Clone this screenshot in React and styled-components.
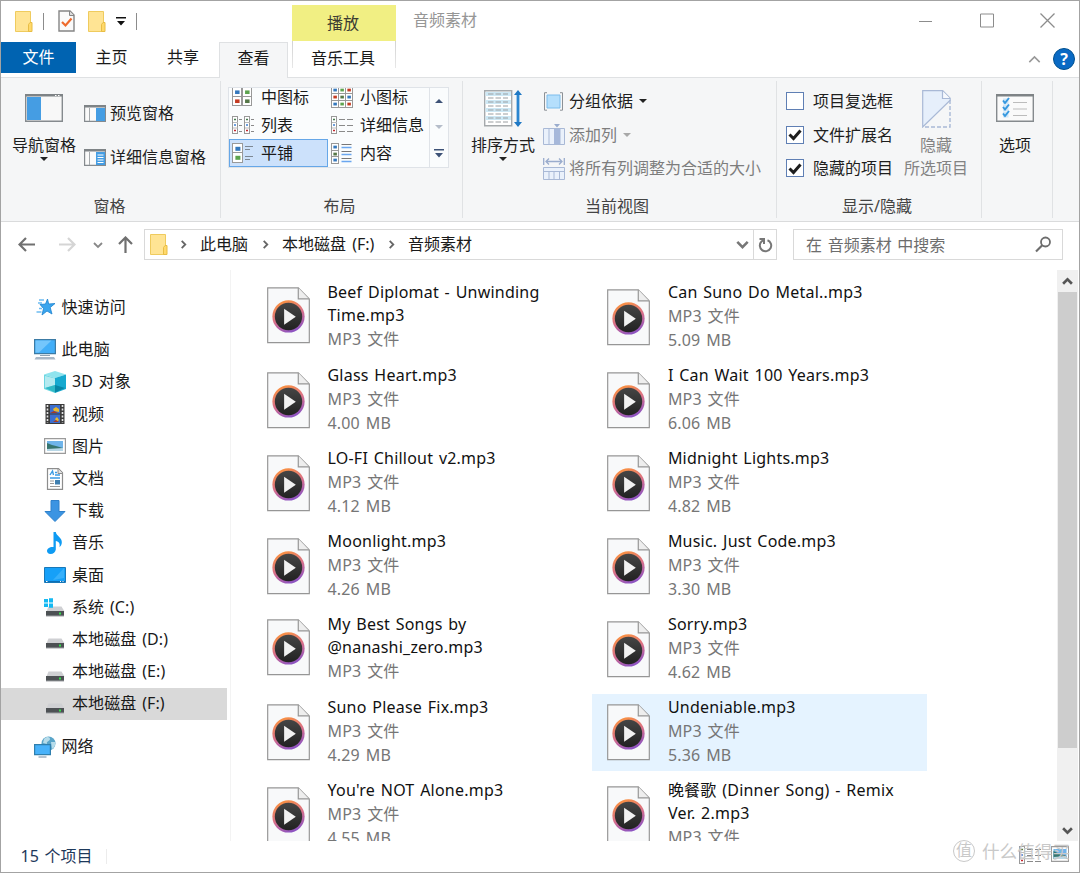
import { memo } from 'react';
import styled, { createGlobalStyle, css } from 'styled-components';

const GlobalStyle = createGlobalStyle`
  * {
    box-sizing: border-box;
  }

  body {
    margin: 0;
    background: white;
    font-family: 'Noto Sans', 'Noto Sans CJK SC', sans-serif;
    font-size: 16px;
    line-height: 24px;
    color: #1a1a1a;
    overflow: hidden;
  }

  svg {
    display: block;
    flex: none;
  }
`;

const Window = styled.div`
  display: flex;
  flex-direction: column;
  width: 1080px;
  height: 873px;
  border: 1px solid #a3a3a3;
  background: white;
  white-space: nowrap;
  overflow: hidden;
`;

/* title bar and tabs */

const Head = styled.header`
  display: flex;
  height: 77px;
  flex: none;
  border-bottom: 1px solid #dfe1e3;
`;

const HeadLeft = styled.div`
  display: flex;
  flex-direction: column;
  width: 291px;
`;

const QuickBar = styled.div`
  display: flex;
  align-items: center;
  height: 41px;
  padding: 0 0 1px 13px;
  flex: none;
`;

const QuickDivider = styled.i`
  width: 1px;
  height: 17px;
  background: #8c8c8c;
  margin: 0 ${({ $right }) => $right}px 0 ${({ $left }) => $left}px;
`;

const Tabs = styled.nav`
  display: flex;
  height: 36px;
`;

const Tab = styled.div`
  width: ${({ $width }) => $width}px;
  height: 31px;
  padding-top: 3px;
  text-align: center;
  ${({ $file }) =>
    $file &&
    css`
      background: #0063b1;
      color: white;
    `}
  ${({ $active }) =>
    $active &&
    css`
      height: 36px;
      background: #f5f6f7;
      border: 1px solid #dfe1e3;
      border-bottom: 0;
    `}
`;

const ContextTab = styled.div`
  width: 104px;
  text-align: center;
`;

const ContextTitle = styled.div`
  height: 36px;
  margin-top: 4px;
  padding: 6px 2px 0 0;
  background: #f1ef83;
  color: #3c3c32;
`;

const ContextName = styled.div`
  height: 27px;
  padding: 5px 2px 0 0;
  border: 1px solid;
  border-width: 0 1px;
  border-image: linear-gradient(#d2d2d2, #e8e8e8) 1;
`;

const Caption = styled.div`
  padding: 7px 0 0 17px;
  flex: 1;
  color: #969696;
`;

const HeadRight = styled.div`
  width: 165px;
  color: #8c8c8c;
`;

const Controls = styled.div`
  display: flex;
  align-items: center;
  height: 39px;
  gap: 41.5px;
  padding-left: 4px;
`;

const HelpRow = styled.div`
  display: flex;
  align-items: center;
  justify-content: flex-end;
  gap: 12px;
  height: 38px;
  padding-right: 4px;
`;

const HelpBadge = styled.div`
  width: 22px;
  height: 22px;
  border: 1px solid #00508f;
  border-radius: 50%;
  background: #0a6ac4;
  color: white;
  font-weight: 700;
  line-height: 20px;
  text-align: center;
`;

/* ribbon */

const Ribbon = styled.section`
  display: flex;
  flex: none;
  height: 144px;
  padding: 3px 0 3px;
  background: #f5f6f7;
  border-bottom: 1px solid #dadbdc;
`;

const Group = styled.div`
  display: flex;
  flex-direction: column;
  width: ${({ $width }) => $width}px;
  border-right: 1px solid #e0e2e4;
`;

const GroupBody = styled.div`
  display: flex;
  height: 113px;
  padding-left: ${({ $left }) => $left}px;
`;

const GroupName = styled.div`
  padding-right: ${({ $shift = 4 }) => $shift}px;
  text-align: center;
  color: #444;
`;

const BigButton = styled.div`
  display: flex;
  flex-direction: column;
  align-items: center;
  width: 64px;
  padding-top: ${({ $top = 13 }) => $top}px;
  color: ${({ $off }) => ($off ? '#838383' : '#1e1e1e')};
`;

const BigLabel = styled.div`
  margin-top: ${({ $gap = 12 }) => $gap}px;
  line-height: 23px;
  text-align: center;
`;

const Caret = styled.i`
  width: 0;
  height: 0;
  border: 4px solid transparent;
  border-bottom: 0;
  border-top-color: ${({ $off }) => ($off ? '#a8a8a8' : '#222')};
`;

const Stack = styled.div`
  display: flex;
  flex-direction: column;
  gap: ${({ $gap }) => $gap}px;
  padding: ${({ $top }) => $top}px 0 0 ${({ $left }) => $left}px;
`;

const SmallButton = styled.div`
  display: flex;
  align-items: center;
  gap: ${({ $gap = 4 }) => $gap}px;
  height: 24px;
  color: ${({ $off }) => ($off ? '#7d7d7d' : '#1e1e1e')};

  ${Caret} {
    margin-left: 2px;
  }
`;

const Gallery = styled.div`
  display: flex;
  width: 221px;
  height: 81px;
  margin-top: 6px;
  border: 1px solid #dfe3e8;
  background: #fafcfd;
  overflow: hidden;
`;

const GalleryItems = styled.div`
  display: grid;
  grid-template-columns: 99px 101px;
  grid-auto-rows: 28px;
  align-content: end;
`;

const GalleryItem = styled.div`
  display: flex;
  align-items: center;
  gap: 8px;
  padding-left: 2px;
  border: 1px solid ${({ $active }) => ($active ? '#66a7e8' : 'transparent')};
  background: ${({ $active }) => ($active ? '#cce1fb' : 'transparent')};
`;

const GalleryIcon = styled.span`
  display: grid;
  width: 21px;
  align-items: center;
`;

const GalleryScroll = styled.div`
  display: grid;
  grid-template-rows: 25px 27px 27px;
  width: 19px;
  border-left: 1px solid #dfe3e8;
  place-items: center;
`;

const Checkbox = styled.span`
  display: flex;
  align-items: center;
  justify-content: center;
  width: 18px;
  height: 18px;
  border: 1px solid #5f7fb4;
  background: white;
`;

/* address bar */

const AddressBar = styled.div`
  display: flex;
  align-items: center;
  height: 48px;
  flex: none;
  padding: 0 16px 3px 17px;
`;

const NavIcons = styled.div`
  display: flex;
  align-items: center;
  width: 126px;
`;

const AddressBox = styled.div`
  display: flex;
  align-items: center;
  width: 633px;
  height: 31px;
  border: 1px solid #d9d9d9;
  padding-left: 4px;
`;

const Crumb = styled.span`
  width: ${({ $width }) => $width}px;
  padding-bottom: 2px;
  word-spacing: 2px;
`;

const Refresh = styled.div`
  display: grid;
  place-items: center;
  width: 23px;
  height: 29px;
  border-left: 1px solid #d9d9d9;
  margin-left: auto;
`;

const SearchBox = styled.div`
  display: flex;
  align-items: center;
  justify-content: space-between;
  width: 270px;
  height: 31px;
  margin-left: 16px;
  padding: 0 10px 0 12px;
  border: 1px solid #d9d9d9;
  color: #6d6d6d;
  word-spacing: 1.5px;
`;

/* main area */

const Main = styled.main`
  display: flex;
  height: 571px;
  flex: none;
  overflow: hidden;
`;

const Sidebar = styled.aside`
  width: 230px;
  padding-top: 21px;
  border-right: 1px solid #f3f3f3;
`;

const TreeItem = styled.div`
  display: flex;
  align-items: center;
  width: 226px;
  height: 32.2px;
  gap: 6px;
  margin-top: ${({ $space = 0 }) => $space}px;
  padding-left: ${({ $child }) => ($child ? 43 : 32.5)}px;
  background: ${({ $active }) => ($active ? '#d9d9d9' : 'transparent')};

  span {
    padding-bottom: 1px;
    letter-spacing: 0.1px;
    word-spacing: 1.5px;
  }
`;

const Files = styled.div`
  display: grid;
  grid-template-columns: 335px 335px;
  grid-auto-rows: 77.3px;
  gap: 5.8px 5.4px;
  flex: 1;
  padding: 8.6px 0 0 21px;
`;

const File = styled.div`
  display: flex;
  gap: 17.5px;
  padding: ${({ $long }) => ($long ? 2 : 1)}px 0 0 15px;
  background: ${({ $active }) => ($active ? '#e5f3ff' : 'transparent')};
`;

const FileIconBox = styled.div`
  padding-top: ${({ $long }) => ($long ? 6.4 : 9)}px;
`;

const FileName = styled.div`
  line-height: ${({ $long }) => ($long ? 23 : 24)}px;
  letter-spacing: 0.22px;
  word-spacing: 1.3px;
  color: #111;
  white-space: pre;
`;

const FileMeta = styled.div`
  color: #767676;
  letter-spacing: 0.15px;
  word-spacing: 1.6px;
`;

const Scrollbar = styled.div`
  display: flex;
  flex-direction: column;
  align-items: center;
  justify-content: space-between;
  width: 21px;
  margin-right: 1px;
  background: #f0f0f0;
`;

const ScrollButton = styled.div`
  display: grid;
  place-items: center;
  height: 22px;
`;

const Thumb = styled.div`
  width: 19px;
  height: 456px;
  margin-bottom: auto;
  background: #cdcdcd;
`;

const StatusBar = styled.footer`
  display: flex;
  position: relative;
  flex: 1;
  padding: 3px 10px 0 19.5px;
  color: #1e395b;
  word-spacing: 1.5px;
`;

const StatusDivider = styled.i`
  width: 1px;
  height: 15px;
  margin: 5px auto 0 14px;
  background: #ececec;
`;

const ViewIcons = styled.div`
  display: flex;
  gap: 10px;
  padding-top: 2px;
`;

const Watermark = styled.div`
  display: flex;
  align-items: center;
  gap: 7px;
  position: absolute;
  right: 9px;
  top: -2px;
  color: #c9c9c9;
  font-size: 17.6px;
`;

const WatermarkLogo = styled.span`
  width: 22px;
  height: 22px;
  border: 1px solid #c9c9c9;
  border-radius: 50%;
  font-size: 16px;
  line-height: 19px;
  text-align: center;
`;

/* icons */

const FolderIcon = () => (
  <svg width="19" height="23" viewBox="0 0 19 23">
    <path d="M1.5 1.5h15v20h-15z" fill="#ffe494" stroke="#efcb5e" />
    <path d="M14.5 21.5v-7l1.5-2h2v9z" fill="#ffd96b" stroke="#e8bd45" />
  </svg>
);

const CheckDocIcon = () => (
  <svg width="17" height="22" viewBox="0 0 17 22">
    <path d="M1 1h11l4 4v16H1z" fill="#fafafa" stroke="#858585" strokeWidth="1.4" />
    <path d="M11.5 1v4.500H16" fill="#ddd" stroke="#858585" />
    <path d="M4 12l3.500 3.500 6-7" fill="none" stroke="#ee6a2c" strokeWidth="2.2" />
  </svg>
);

const QuickMenuIcon = () => (
  <svg width="10" height="9" viewBox="0 0 10 9">
    <path d="M0 0h10v1.600H0zM1 4h8L5 8.500z" fill="#111" />
  </svg>
);

const Chevron = ({ size = 9, turn = 0, color = '#666', width = 2 }) => (
  <svg width={size} height={size} viewBox="0 0 10 10">
    <path
      d="M1 3l4 4 4-4"
      transform={`rotate(${turn} 5 5)`}
      fill="none"
      stroke={color}
      strokeWidth={width}
    />
  </svg>
);

const NavPaneIcon = () => (
  <svg width="38" height="28" viewBox="0 0 38 28">
    <path d="M.7.7h36.6v26.6H.7z" fill="#f8f8f8" stroke="#858a8e" strokeWidth="1.4" />
    <path d="M0 0h38v2.500H0z" fill="#7e8386" />
    <path d="M30 1h1.500v1H30zM33 1h1.500v1H33z" fill="white" />
    <path d="M2 3h14v23H2z" fill="#459de3" />
  </svg>
);

const SidePaneIcon = ({ lines }) => (
  <svg width="22" height="17" viewBox="0 0 22 17">
    <path d="M.6.600h20.800v15.800H.6z" fill="#fafafa" stroke="#858a8e" strokeWidth="1.2" />
    <path d="M0 0h22v2.500H0z" fill="#7e8386" />
    <path d="M5.500 3v13" stroke="#a5a9ac" />
    <path d="M12 3h9v13h-9z" fill="#459de3" />
    {lines && <path d="M13.500 6h6M13.500 8.500h6M13.500 11h6M13.500 13.500h6" stroke="white" />}
  </svg>
);

const tileColors = ['#3478bd', '#5da34e', '#c43b22', '#557747'];

const Tile = ({ x, y, size, color }) => (
  <>
    <rect x={x + 0.5} y={y + 0.5} width={size} height={size} fill="white" stroke="#999" />
    <rect x={x + size * 0.34} y={y + size * 0.38} width={size * 0.5} height={size * 0.4} fill={color} />
  </>
);

const MediumIcon = () => (
  <svg width="20" height="20" viewBox="0 0 20 20">
    <Tile x={0} y={0} size={9} color={tileColors[0]} />
    <Tile x={10} y={0} size={9} color={tileColors[1]} />
    <Tile x={0} y={9} size={9} color={tileColors[2]} />
    <Tile x={10} y={9} size={9} color={tileColors[3]} />
  </svg>
);

const SmallIcon = () => (
  <svg width="22" height="22" viewBox="0 0 22 22">
    {[0, 1, 2].map((row) =>
      [0, 1, 2].map((col) => (
        <Tile key={`${row}${col}`} x={col * 7} y={row * 7} size={7} color={tileColors[(row * 2 + col) % 4]} />
      ))
    )}
  </svg>
);

const DotTower = ({ x }) => (
  <>
    <rect x={x + 0.5} y=".5" width="5" height="17" fill="white" stroke="#999" />
    <path d={`M${x + 1} 6.500h5M${x + 1} 12h5`} stroke="#bbb" />
    <path d={`M${x + 2} 3.500h2`} stroke="#457b4f" strokeWidth="1.500" />
    <path d={`M${x + 2} 9h2`} stroke="#3e7fd1" strokeWidth="1.500" />
    <path d={`M${x + 2} 14.500h2`} stroke="#c4272e" strokeWidth="1.500" />
  </>
);

const ListIcon = () => (
  <svg width="22" height="18" viewBox="0 0 22 18">
    <DotTower x={0} />
    <DotTower x={12} />
    <path d="M7 3.500h3M7 9.500h3M7 15.500h3M19 3.500h3M19 9.500h3M19 15.500h3" stroke="#8a8a8a" />
  </svg>
);

const DetailsIcon = () => (
  <svg width="22" height="18" viewBox="0 0 22 18">
    <DotTower x={0} />
    <path d="M8 3.500h6M16 3.500h6M8 9.500h6M16 9.500h6M8 15.500h6M16 15.500h6" stroke="#8a8a8a" />
  </svg>
);

const TilesIcon = () => (
  <svg width="21" height="20" viewBox="0 0 21 20">
    <Tile x={0} y={0} size={10} color={tileColors[0]} />
    <Tile x={0} y={9} size={10} color={tileColors[1]} />
    <path d="M13 3.500h8M13 6.500h5M13 13.500h8M13 16.500h5" stroke="#7d8894" />
  </svg>
);

const ContentIcon = () => (
  <svg width="21" height="21" viewBox="0 0 21 21">
    <Tile x={0} y={0} size={7} color={tileColors[0]} />
    <Tile x={0} y={7} size={7} color={tileColors[3]} />
    <Tile x={0} y={13} size={7} color={tileColors[0]} />
    <path d="M10.500 1.500h10M10.500 8.500h10M10.500 15.500h10" stroke="#777" />
    <path d="M10.500 4.500h10M10.500 11.500h10M10.500 18.500h10" stroke="#6aa6f0" strokeWidth="1.500" />
  </svg>
);

const SortIcon = () => (
  <svg width="38" height="37" viewBox="0 0 38 37">
    <path d="M.7.700h27v35h-27z" fill="white" stroke="#a5a9ac" strokeWidth="1.400" />
    <path d="M1.500 4h25.500M1.500 12h25.500M1.500 20h25.500M1.500 28h25.500" stroke="#cde8f5" strokeWidth="4" />
    <path
      d="M4 4h20M4 8h20M4 12h20M4 16h20M4 20h20M4 24h20M4 28h20M4 32h20"
      stroke="#9a9ea1"
      strokeDasharray="5.500 2"
    />
    <path d="M34 3v31" stroke="#2a85d0" strokeWidth="2.800" />
    <path d="M30 5l4-5 4 5zM30 32l4 5 4-5z" fill="#1f78c4" />
  </svg>
);

const GroupByIcon = () => (
  <svg width="22" height="19" viewBox="0 0 22 19">
    <path d="M4 .700H1.500v17.500H4M17 .700h2.500v17.500H17" fill="none" stroke="#8c9196" />
    <path d="M4 3h13v13H4z" fill="#b5dffc" stroke="#7dbdec" />
  </svg>
);

const AddColumnIcon = () => (
  <svg width="22" height="21" viewBox="0 0 22 21">
    <path d="M.5 4.500h21v16H.5zM6 5v15M17 5v15" fill="#eaf1fb" stroke="#a9b9d6" />
    <path d="M11 5h6v15h-6z" fill="#a6b8da" />
    <path d="M11 0h6l-3 3.500z" fill="#9aaccd" />
  </svg>
);

const FitColumnsIcon = () => (
  <svg width="22" height="23" viewBox="0 0 22 23">
    <path d="M.7 1v7M21.300 1v7M3 4.500h16M6 1.500L3 4.500l3 3M16 1.500l3 3-3 3" fill="none" stroke="#9aaccd" strokeWidth="1.300" />
    <path d="M.5 10.500h21v12H.5zM.5 14.500h21M6 15v7M11 15v7M16.500 15v7" fill="#eaf1fb" stroke="#a9b9d6" />
  </svg>
);

const TickIcon = () => (
  <svg width="14" height="13" viewBox="0 0 14 13">
    <path d="M1.500 6.500l4 4 7-8" fill="none" stroke="#1e1e1e" strokeWidth="3" />
  </svg>
);

const HideIcon = () => (
  <svg width="29" height="38" viewBox="0 0 29 38">
    <path d="M.7 37V.7h20l7.500 7.500v2L.7 37z" fill="#e6effb" stroke="#a9b9d6" strokeWidth="1.200" />
    <path d="M20.500 1v7.500H28" fill="#f6f9fd" stroke="#a9b9d6" strokeWidth="1.200" />
    <path d="M28 10v27H1" fill="none" stroke="#a9b9d6" strokeWidth="1.400" strokeDasharray="4 2" />
  </svg>
);

const OptionsIcon = () => (
  <svg width="38" height="28" viewBox="0 0 38 28">
    <path d="M.7.700h36.600v26.600H.7z" fill="#fafafa" stroke="#858a8e" strokeWidth="1.400" />
    <path d="M0 0h38v2.500H0z" fill="#7e8386" />
    {[3.5, 10, 16.5].map((y) => (
      <g key={y}>
        <rect x="7" y={y + 1} width="5.500" height="6" fill="#cfe6f7" />
        <path d={`M7 ${y + 3}l2 2.500 4-5`} fill="none" stroke="#3698df" strokeWidth="2" />
        <path d={`M17 ${y + 5}h14`} stroke="#bcbcbc" />
      </g>
    ))}
  </svg>
);

const ArrowIcon = ({ turn = 0, color = '#707070' }) => (
  <svg width="17" height="17" viewBox="0 0 17 17">
    <g transform={`rotate(${turn} 8.5 8.5)`} fill="none" stroke={color} strokeWidth="2.2">
      <path d="M1.500 8.500H17M8 2L1.500 8.500 8 15" />
    </g>
  </svg>
);

const RefreshIcon = () => (
  <svg width="15" height="16" viewBox="0 0 15 16">
    <path d="M9.500 3.200A5.700 5.700 0 1 1 3.500 4.500L5.500 3" fill="none" stroke="#777" strokeWidth="2" />
    <path d="M1.500 2h4.500v5" fill="none" stroke="#777" strokeWidth="2" />
  </svg>
);

const SearchIcon = () => (
  <svg width="17" height="17" viewBox="0 0 17 17">
    <circle cx="10.500" cy="6" r="4.500" fill="none" stroke="#6d6d6d" strokeWidth="1.800" />
    <path d="M7.500 9L1 15.500" stroke="#6d6d6d" strokeWidth="2.200" />
  </svg>
);

const StarIcon = () => (
  <svg width="22" height="18" viewBox="0 0 22 18">
    <path d="M13.500 1l1.200 5 6.300-.5-4.800 4 1.800 6.500-5-3-5 4 1.500-6.500-3.500-4 5.500-.5z" fill="#3aa5ee" stroke="#1b81cf" strokeWidth=".8" />
    <path d="M5 2h5M4 5h4M5 10.500h3M2.500 14h5" stroke="#6dbcf1" strokeWidth="1.300" />
  </svg>
);

const ComputerIcon = () => (
  <svg width="22" height="21" viewBox="0 0 22 21">
    <path d="M.6.600h20.800v14H.6z" fill="#42aef8" stroke="#3c7ba5" strokeWidth="1.200" />
    <path d="M1.500 1.500h16L5 13.500H1.500z" fill="#74c6fc" />
    <path d="M6 16.500h10" stroke="#8fa2b2" />
    <path d="M2 18h18l1.500 2.500H.5z" fill="#a9b8c7" />
  </svg>
);

const CubeIcon = () => (
  <svg width="22" height="22" viewBox="0 0 22 22">
    <path d="M0 3.500L11 0l11 3.500L11 7z" fill="#8fe4ee" />
    <path d="M0 3.500L11 7v15L0 18z" fill="#6dd6e1" />
    <path d="M22 3.500L11 7v15l11-4z" fill="#16a9cf" />
    <path d="M1 5l10 2.500V14L1 17z" fill="#b4eaf0" />
    <path d="M1 17l10-3v7.500z" fill="#2fb9c6" />
    <path d="M11 14l10 3-10 4.500z" fill="#0786a5" />
  </svg>
);

const VideoIcon = () => (
  <svg width="22" height="20" viewBox="0 0 22 20">
    <path d="M1.500 0h19v20h-19z" fill="#3b3b3b" />
    <path d="M6 1h10v8.500H6zM6 10.500h10V19H6z" fill="#3c6fd0" />
    <path d="M9 5l3-2 3 2v3l-5-1zM11 15l2-2 2 3-2 2z" fill="#e6b72f" />
    <path d="M6 9l4-2 4 2zM9 18l3-2 3 2z" fill="#a63b25" />
    <path d="M3.500 1v18M18.500 1v18" stroke="#e3e3e3" strokeWidth="1.600" strokeDasharray="2 1.500" />
  </svg>
);

const PictureIcon = ({ size = 22 }) => (
  <svg width={size} height="16" viewBox="0 0 22 16" preserveAspectRatio="none">
    <path d="M.6.600h20.800v14.800H.6z" fill="white" stroke="#9b9b9b" strokeWidth="1.200" />
    <path d="M3 3h16v10H3z" fill="#6fb4ea" />
    <path d="M3 5l5 2 4 1 7 2v3H3z" fill="#37756f" />
    <path d="M3 11l16-1v3H3z" fill="#b8d7e6" />
  </svg>
);

const DocumentIcon = () => (
  <svg width="22" height="22" viewBox="0 0 22 22">
    <path d="M3.500.700h11l4 4v16.600h-15z" fill="white" stroke="#8d8d8d" strokeWidth="1.200" />
    <path d="M14 1v4.500h4.500" fill="#e3e3e3" stroke="#8d8d8d" />
    <path d="M6 7l2.500-4 1 4M11 4.500h2M11 7h5M6 10h10" fill="none" stroke="#3b9be3" strokeWidth="1.400" />
    <path d="M6 13h4M6 15.500h4M6 18.500h10" stroke="#9a9a9a" />
    <path d="M11 12h5v4.500h-5z" fill="#3f7fb0" />
  </svg>
);

const DownloadIcon = () => (
  <svg width="22" height="22" viewBox="0 0 22 22">
    <path d="M7 .500h8v11h6L11 21.500 1 11.500h6z" fill="#3b94e2" stroke="#2e80cb" />
  </svg>
);

const MusicIcon = () => (
  <svg width="22" height="22" viewBox="0 0 22 22">
    <path
      d="M9.500 0h2.300c.5 4 6.700 5.500 6 11-.3 2-1 3-2.300 4.300.8-4-.5-5.500-3.700-6.300v8.500c-.3 2.500-2.500 4.500-5.300 4.500-2.300 0-3.500-1.500-3.500-3 0-2.500 3-4.500 6.500-4z"
      fill="#0e9bf3"
    />
  </svg>
);

const DesktopIcon = () => (
  <svg width="22" height="16" viewBox="0 0 22 16">
    <path d="M.5.500h21v15H.5z" fill="#16a0f8" stroke="#1878b8" />
    <path d="M20 1v10L9 13z" fill="#37b0fb" />
    <path d="M1 14.500h20" stroke="#0c6fb5" />
    <path d="M2 14.500h1.500M16 14.500h1M18.500 14.500h1" stroke="white" />
  </svg>
);

const DriveIcon = ({ system }) => (
  <svg width="22" height="22" viewBox="0 0 22 22">
    <path d="M4.500 10.500h13l3 5h-18z" fill="#cfd0d3" />
    <path d="M2 15h18v5H2z" fill="#4d5154" />
    <path d="M2 20h18" stroke="#9fa2a5" />
    <path d="M15 17.500h2" stroke="#35e04b" strokeWidth="2" />
    {system && <path d="M0 4h4v3.500H0zM5 3.200h4v4.300H5zM0 8.500h4V12H0zM5 8.500h4v4.300H5z" fill="#15b9f2" transform="translate(0 -1)" />}
  </svg>
);

const NetworkIcon = () => (
  <svg width="22" height="22" viewBox="0 0 22 22">
    <circle cx="14.500" cy="7.500" r="7" fill="#5aa5c9" />
    <path d="M10 3c3-3 6-2 6 0s-4 2-3 5l-4-1zM17 6l4 0c1 3-1 6-3 7z" fill="#b7dcea" />
    <path d="M.6 8.600h15.800v10H.6z" fill="#48b2fa" stroke="#2f7fae" strokeWidth="1.200" />
    <path d="M4.500 21h8" stroke="#9fb1c0" strokeWidth="1.500" />
  </svg>
);

const Mp3Icon = () => (
  <svg width="43" height="57" viewBox="0 0 44 58">
    <defs>
      <linearGradient id="ring" x1="0.300" y1="0" x2="0.700" y2="1">
        <stop offset="0" stopColor="#fb923e" />
        <stop offset="0.500" stopColor="#d9708a" />
        <stop offset="1" stopColor="#8450c8" />
      </linearGradient>
      <linearGradient id="disc" x1="0" y1="0" x2="0" y2="1">
        <stop offset="0" stopColor="#454545" />
        <stop offset="1" stopColor="#222" />
      </linearGradient>
    </defs>
    <path d="M.7.700h31.300l11.300 11.500v44.600H.7z" fill="#f8f9fa" stroke="#969696" strokeWidth="1.200" />
    <path d="M32 .700v11.300h11" fill="#eee" stroke="#969696" strokeWidth="1.200" />
    <circle cx="22" cy="30" r="16.500" fill="url(#ring)" />
    <circle cx="22" cy="30" r="14" fill="url(#disc)" />
    <path d="M17.500 22v16.500l12-8.250z" fill="#f2f2f2" />
  </svg>
);

const gallery = [
  { label: '中图标', icon: <MediumIcon /> },
  { label: '小图标', icon: <SmallIcon /> },
  { label: '列表', icon: <ListIcon /> },
  { label: '详细信息', icon: <DetailsIcon /> },
  { label: '平铺', icon: <TilesIcon />, active: true },
  { label: '内容', icon: <ContentIcon /> },
];

const tree = [
  { label: '快速访问', icon: <StarIcon /> },
  { label: '此电脑', icon: <ComputerIcon />, space: 10.5 },
  { label: '3D 对象', icon: <CubeIcon />, child: true },
  { label: '视频', icon: <VideoIcon />, child: true },
  { label: '图片', icon: <PictureIcon />, child: true },
  { label: '文档', icon: <DocumentIcon />, child: true },
  { label: '下载', icon: <DownloadIcon />, child: true },
  { label: '音乐', icon: <MusicIcon />, child: true },
  { label: '桌面', icon: <DesktopIcon />, child: true },
  { label: '系统 (C:)', icon: <DriveIcon system />, child: true },
  { label: '本地磁盘 (D:)', icon: <DriveIcon />, child: true },
  { label: '本地磁盘 (E:)', icon: <DriveIcon />, child: true },
  { label: '本地磁盘 (F:)', icon: <DriveIcon />, child: true, active: true },
  { label: '网络', icon: <NetworkIcon />, space: 10.5 },
];

const files = [
  { name: 'Beef Diplomat - Unwinding\nTime.mp3' },
  { name: 'Can Suno Do Metal..mp3', size: '5.09 MB' },
  { name: 'Glass Heart.mp3', size: '4.00 MB' },
  { name: 'I Can Wait 100 Years.mp3', size: '6.06 MB' },
  { name: 'LO-FI Chillout v2.mp3', size: '4.12 MB' },
  { name: 'Midnight Lights.mp3', size: '4.82 MB' },
  { name: 'Moonlight.mp3', size: '4.26 MB' },
  { name: 'Music. Just Code.mp3', size: '3.30 MB' },
  { name: 'My Best Songs by\n@nanashi_zero.mp3' },
  { name: 'Sorry.mp3', size: '4.62 MB' },
  { name: 'Suno Please Fix.mp3', size: '4.29 MB' },
  { name: 'Undeniable.mp3', size: '5.36 MB', active: true },
  { name: "You're NOT Alone.mp3", size: '4.55 MB' },
  { name: '晚餐歌 (Dinner Song) - Remix\nVer. 2.mp3' },
];

const Header = () => (
  <Head>
    <HeadLeft>
      <QuickBar>
        <FolderIcon />
        <QuickDivider $left={10} $right={14} />
        <CheckDocIcon />
        <svg width="12" height="1" />
        <FolderIcon />
        <svg width="10" height="1" />
        <QuickMenuIcon />
        <QuickDivider $left={10} $right={0} />
      </QuickBar>
      <Tabs>
        <Tab $file $width={75}>文件</Tab>
        <Tab $width={71}>主页</Tab>
        <Tab $width={72}>共享</Tab>
        <Tab $active $width={69}>查看</Tab>
      </Tabs>
    </HeadLeft>
    <ContextTab>
      <ContextTitle>播放</ContextTitle>
      <ContextName>音乐工具</ContextName>
    </ContextTab>
    <Caption>音频素材</Caption>
    <HeadRight>
      <Controls>
        <svg width="15" height="15" viewBox="0 0 15 15">
          <path d="M1 8.500h13" stroke="#8c8c8c" />
        </svg>
        <svg width="24" height="15" viewBox="0 0 24 15">
          <path d="M5.500 1h13v13h-13z" fill="none" stroke="#8c8c8c" />
        </svg>
        <svg width="15" height="15" viewBox="0 0 15 15">
          <path d="M.5.500l14 14M14.500.500l-14 14" stroke="#8c8c8c" strokeWidth="1.300" />
        </svg>
      </Controls>
      <HelpRow>
        <Chevron size={13} turn={180} color="#999" width={1.2} />
        <HelpBadge>?</HelpBadge>
      </HelpRow>
    </HeadRight>
  </Head>
);

const Toolbar = () => (
  <Ribbon>
    <Group $width={220}>
      <GroupBody $left={11}>
        <BigButton>
          <NavPaneIcon />
          <BigLabel>导航窗格</BigLabel>
          <Caret />
        </BigButton>
        <Stack $top={20} $left={8} $gap={20}>
          <SmallButton>
            <SidePaneIcon />
            预览窗格
          </SmallButton>
          <SmallButton>
            <SidePaneIcon lines />
            详细信息窗格
          </SmallButton>
        </Stack>
      </GroupBody>
      <GroupName $shift={2}>窗格</GroupName>
    </Group>
    <Group $width={242}>
      <GroupBody $left={7}>
        <Gallery>
          <GalleryItems>
            {gallery.map(({ label, icon, active }) => (
              <GalleryItem key={label} $active={active}>
                <GalleryIcon>{icon}</GalleryIcon>
                {label}
              </GalleryItem>
            ))}
          </GalleryItems>
          <GalleryScroll>
            <svg width="8" height="4" viewBox="0 0 8 4">
              <path d="M0 4l4-4 4 4z" fill="#3d5277" />
            </svg>
            <svg width="8" height="4" viewBox="0 0 8 4">
              <path d="M0 0l4 4 4-4z" fill="#b5bdca" />
            </svg>
            <svg width="10" height="9" viewBox="0 0 10 9">
              <path d="M0 0h10v1.500H0zM1 4l4 4.500L9 4z" fill="#3d5277" />
            </svg>
          </GalleryScroll>
        </Gallery>
      </GroupBody>
      <GroupName>布局</GroupName>
    </Group>
    <Group $width={314}>
      <GroupBody $left={8}>
        <BigButton $top={9}>
          <SortIcon />
          <BigLabel $gap={7}>排序方式</BigLabel>
          <Caret />
        </BigButton>
        <Stack $top={8} $left={8} $gap={9.5}>
          <SmallButton>
            <GroupByIcon />
            分组依据
            <Caret />
          </SmallButton>
          <SmallButton $off>
            <AddColumnIcon />
            添加列
            <Caret $off />
          </SmallButton>
          <SmallButton $off>
            <FitColumnsIcon />
            将所有列调整为合适的大小
          </SmallButton>
        </Stack>
      </GroupBody>
      <GroupName $shift={5}>当前视图</GroupName>
    </Group>
    <Group $width={205}>
      <GroupBody $left={9}>
        <Stack $top={8} $left={0} $gap={9.5}>
          <SmallButton $gap={9}>
            <Checkbox />
            项目复选框
          </SmallButton>
          <SmallButton $gap={9}>
            <Checkbox>
              <TickIcon />
            </Checkbox>
            文件扩展名
          </SmallButton>
          <SmallButton $gap={9}>
            <Checkbox>
              <TickIcon />
            </Checkbox>
            隐藏的项目
          </SmallButton>
        </Stack>
        <svg width="11" height="1" />
        <BigButton $off $top={9}>
          <HideIcon />
          <BigLabel $gap={6}>
            隐藏
            <br />
            所选项目
          </BigLabel>
        </BigButton>
      </GroupBody>
      <GroupName>显示/隐藏</GroupName>
    </Group>
    <Group $width={71}>
      <GroupBody $left={1}>
        <BigButton>
          <OptionsIcon />
          <BigLabel>选项</BigLabel>
        </BigButton>
      </GroupBody>
    </Group>
  </Ribbon>
);

const Navigation = () => (
  <AddressBar>
    <NavIcons>
      <ArrowIcon />
      <svg width="24" height="1" />
      <ArrowIcon turn={180} color="#d5d5d5" />
      <svg width="17" height="1" />
      <Chevron size={10} color="#888" width={1.8} />
      <svg width="14" height="1" />
      <ArrowIcon turn={90} />
    </NavIcons>
    <AddressBox>
      <FolderIcon />
      <svg width="11" height="1" />
      <Chevron turn={-90} />
      <svg width="12" height="1" />
      <Crumb $width={61}>此电脑</Crumb>
      <Chevron turn={-90} />
      <svg width="12" height="1" />
      <Crumb $width={105}>本地磁盘 (F:)</Crumb>
      <Chevron turn={-90} />
      <svg width="12" height="1" />
      <Crumb $width={328}>音频素材</Crumb>
      <Chevron size={13} color="#777" />
      <Refresh>
        <RefreshIcon />
      </Refresh>
    </AddressBox>
    <SearchBox>
      在 音频素材 中搜索
      <SearchIcon />
    </SearchBox>
  </AddressBar>
);

const FileTile = ({ name, size, active }) => {
  const long = !size;

  return (
    <File $active={active} $long={long}>
      <FileIconBox $long={long}>
        <Mp3Icon />
      </FileIconBox>
      <div>
        <FileName $long={long}>{name}</FileName>
        <FileMeta>MP3 文件</FileMeta>
        {size && <FileMeta>{size}</FileMeta>}
      </div>
    </File>
  );
};

const App = () => (
  <>
    <GlobalStyle />
    <Window>
      <Header />
      <Toolbar />
      <Navigation />
      <Main>
        <Sidebar>
          {tree.map(({ label, icon, child, space, active }) => (
            <TreeItem key={label} $child={child} $space={space} $active={active}>
              {icon}
              <span>{label}</span>
            </TreeItem>
          ))}
        </Sidebar>
        <Files>
          {files.map((file) => (
            <FileTile key={file.name} {...file} />
          ))}
        </Files>
        <Scrollbar>
          <ScrollButton>
            <Chevron size={11} turn={180} color="#555" width={2.4} />
          </ScrollButton>
          <Thumb />
          <ScrollButton>
            <Chevron size={11} color="#555" width={2.4} />
          </ScrollButton>
        </Scrollbar>
      </Main>
      <StatusBar>
        15 个项目
        <StatusDivider />
        <ViewIcons>
          <DetailsIcon />
          <PictureIcon size={18} />
        </ViewIcons>
        <Watermark>
          <WatermarkLogo>值</WatermarkLogo>
          什么值得买
        </Watermark>
      </StatusBar>
    </Window>
  </>
);

export default memo(App);
